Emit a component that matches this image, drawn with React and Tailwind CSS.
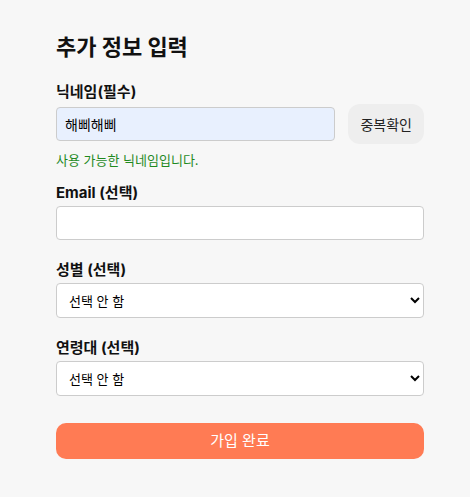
import React, { useState } from 'react';

const font = { fontFamily: 'Inter, "Noto Sans CJK KR", sans-serif' };

function Field({ label, children }) {
  return (
    <div className="mb-[21px]">
      <label className="block mb-1 text-[15px] leading-[18px] font-bold text-[#111]">{label}</label>
      {children}
    </div>
  );
}

function AgeSelect({ options }) {
  return (
    <select className="w-full h-[35px] px-2 text-[13px] text-black bg-white border border-[#ccc] rounded-[4px] appearance-auto">
      {options.map((o) => (
        <option key={o}>{o}</option>
      ))}
    </select>
  );
}

export default function App() {
  const [nickname, setNickname] = useState('해삐해삐');
  const [email, setEmail] = useState('');

  return (
    <div className="min-h-[497px] bg-[#f7f7f7]" style={font}>
      <div className="w-[368px] ml-[56px] pt-[33px] pb-8">
        <h2 className="text-[22px] leading-[28px] font-bold text-[#111] mb-[22px]">추가 정보 입력</h2>

        <div className="mb-[16px]">
          <label className="block mb-[3px] text-[15px] leading-[18px] font-bold text-[#111]">닉네임(필수)</label>
          <div className="flex items-center gap-[13px]">
            <input
              value={nickname}
              onChange={(e) => setNickname(e.target.value)}
              className="flex-1 min-w-0 h-[34px] px-2 text-[14px] text-black bg-[#e8f0fe] border border-[#ccc] rounded-[4px] outline-none"
            />
            <button className="h-[40px] px-3 text-[14px] text-[#222] bg-[#eee] rounded-[12px]">중복확인</button>
          </div>
          <p className="mt-2 text-[13px] leading-[16px] text-[#1f8a1f]">사용 가능한 닉네임입니다.</p>
        </div>

        <Field label="Email (선택)">
          <input
            type="email"
            value={email}
            onChange={(e) => setEmail(e.target.value)}
            className="w-full h-[34px] px-2 text-[14px] bg-white border border-[#ccc] rounded-[4px] outline-none"
          />
        </Field>

        <Field label="성별 (선택)">
          <AgeSelect options={['선택 안 함', '남성', '여성']} />
        </Field>

        <Field label="연령대 (선택)">
          <AgeSelect options={['선택 안 함', '10대', '20대', '30대', '40대', '50대 이상']} />
        </Field>

        <button className="w-full h-[36px] mt-[6px] text-[15px] text-white bg-[#ff7b54] rounded-[10px]">가입 완료</button>
      </div>
    </div>
  );
}
